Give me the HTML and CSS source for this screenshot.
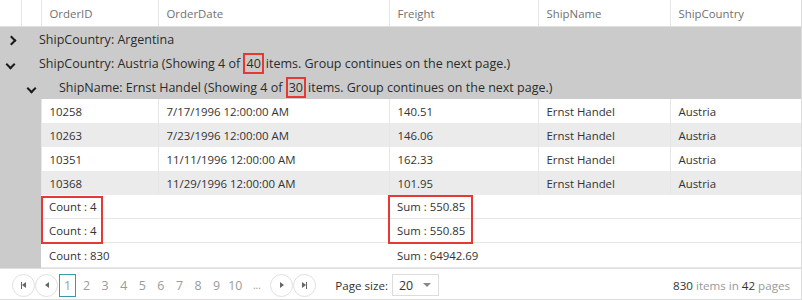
FILE: index.html
```html
<!DOCTYPE html>
<html>
<head>
  <meta charset="utf-8">
  <title>Orders Grid</title>
  <link rel="stylesheet" href="styles.css">
</head>

<body>
  <div class="grid">
    <table class="grid-table">
      <colgroup>
        <col class="col-indent">
        <col class="col-indent2">
        <col class="col-id">
        <col class="col-date">
        <col class="col-freight">
        <col class="col-name">
        <col>
      </colgroup>
      <thead>
        <tr>
          <th></th>
          <th></th>
          <th>OrderID</th>
          <th>OrderDate</th>
          <th>Freight</th>
          <th>ShipName</th>
          <th>ShipCountry</th>
        </tr>
      </thead>
      <tbody>
        <tr class="group-row">
          <td class="toggle"><span class="chev chev-right"></span></td>
          <td colspan="6">ShipCountry: Argentina</td>
        </tr>
        <tr class="group-row">
          <td class="toggle"><span class="chev chev-down"></span></td>
          <td colspan="6">ShipCountry: Austria (Showing 4 of <span class="mark">40</span>items. Group continues on the next page.)</td>
        </tr>
        <tr class="group-row">
          <td></td>
          <td class="toggle"><span class="chev chev-down"></span></td>
          <td colspan="5">ShipName: Ernst Handel (Showing 4 of <span class="mark">30</span>items. Group continues on the next page.)</td>
        </tr>
        <tr class="data-row">
          <td class="indent"></td><td class="indent"></td>
          <td>10258</td><td>7/17/1996 12:00:00 AM</td><td>140.51</td><td>Ernst Handel</td><td>Austria</td>
        </tr>
        <tr class="data-row alt">
          <td class="indent"></td><td class="indent"></td>
          <td>10263</td><td>7/23/1996 12:00:00 AM</td><td>146.06</td><td>Ernst Handel</td><td>Austria</td>
        </tr>
        <tr class="data-row">
          <td class="indent"></td><td class="indent"></td>
          <td>10351</td><td>11/11/1996 12:00:00 AM</td><td>162.33</td><td>Ernst Handel</td><td>Austria</td>
        </tr>
        <tr class="data-row alt">
          <td class="indent"></td><td class="indent"></td>
          <td>10368</td><td>11/29/1996 12:00:00 AM</td><td>101.95</td><td>Ernst Handel</td><td>Austria</td>
        </tr>
        <tr class="footer-row">
          <td class="indent"></td><td class="indent"></td>
          <td>Count : 4</td><td></td><td>Sum : 550.85</td><td></td><td></td>
        </tr>
        <tr class="footer-row">
          <td class="indent"></td><td class="indent"></td>
          <td>Count : 4</td><td></td><td>Sum : 550.85</td><td></td><td></td>
        </tr>
        <tr class="footer-row">
          <td class="indent"></td><td class="indent"></td>
          <td>Count : 830</td><td></td><td>Sum : 64942.69</td><td></td><td></td>
        </tr>
      </tbody>
    </table>

    <!-- highlight boxes drawn over the aggregate cells -->
    <div class="callout callout-count"></div>
    <div class="callout callout-sum"></div>

    <div class="pager">
      <div class="pager-nav">
        <span class="nav-btn"><span class="bar"></span><span class="tri tri-left"></span></span>
        <span class="nav-btn"><span class="tri tri-left"></span></span>
        <span class="page current">1</span>
        <span class="page">2</span>
        <span class="page">3</span>
        <span class="page">4</span>
        <span class="page">5</span>
        <span class="page">6</span>
        <span class="page">7</span>
        <span class="page">8</span>
        <span class="page">9</span>
        <span class="page">10</span>
        <span class="page more">...</span>
        <span class="nav-btn"><span class="tri tri-right"></span></span>
        <span class="nav-btn"><span class="tri tri-right"></span><span class="bar"></span></span>
      </div>
      <div class="page-size">
        <span>Page size:</span>
        <span class="dropdown">20<span class="caret"></span></span>
      </div>
      <div class="pager-info"><b>830</b> items in <b>42</b> pages</div>
    </div>
  </div>
</body>
</html>
```

FILE: styles.css
```css
body {
  margin: 0;
  font-family: "Open Sans", "Noto Sans", sans-serif;
  font-size: 11.4px;
  color: #333;
  background-color: white;
}

.grid {
  position: relative;
  width: 802px;
  height: 300px;
  box-sizing: border-box;
  border-right: 1px solid #dcdcdc;
  border-bottom: 1px solid #dcdcdc;
  overflow: hidden;
}

.grid-table {
  width: 100%;
  border-collapse: collapse;
  table-layout: fixed;
}

.col-indent { width: 21px; }
.col-indent2 { width: 20px; }
.col-id { width: 117px; }
.col-date { width: 231px; }
.col-freight { width: 149px; }
.col-name { width: 132px; }

th {
  height: 26px;
  padding: 0 8px;
  text-align: left;
  font-weight: normal;
  color: #707070;
  border-left: 1px solid #e6e6e6;
  border-bottom: 1px solid #e0e0e0;
  white-space: nowrap;
}

th:first-child {
  border-left: none;
}

td {
  height: 24px;
  padding: 0 8px;
  white-space: nowrap;
}

.group-row td {
  background-color: #cbcbcb;
  font-size: 12.5px;
  color: #2b2b2b;
}

.group-row td.toggle {
  padding: 0;
  text-align: center;
}

.group-row td[colspan] {
  padding-left: 18px;
}

.chev {
  display: inline-block;
  width: 5px;
  height: 5px;
  border-right: 2px solid #1a1a1a;
  border-bottom: 2px solid #1a1a1a;
}

.chev-right {
  transform: rotate(-45deg);
  margin-left: 1px;
  margin-top: 3px;
}

.chev-down {
  transform: rotate(45deg);
  margin-top: -2px;
}

.mark {
  border: 2px solid #e53935;
  padding: 0 1px;
  margin-right: 2px;
}

.data-row td {
  border-left: 1px solid #e6e6e6;
}

.data-row.alt td {
  background-color: #ebebeb;
}

td.indent {
  background-color: #cbcbcb;
  border-left: none;
  padding: 0;
}

.data-row td.indent {
  background-color: #cbcbcb;
}

.footer-row td {
  height: 23px;
  border-bottom: 1px solid #e6e6e6;
}

.footer-row:last-child td {
  height: 24px;
}

.footer-row td.indent {
  border-bottom: none;
}

.callout {
  position: absolute;
  border: 2px solid #e53935;
  box-sizing: border-box;
}

.callout-count {
  left: 41px;
  top: 196px;
  width: 62px;
  height: 48px;
}

.callout-sum {
  left: 388px;
  top: 195px;
  width: 85px;
  height: 49px;
}

.pager {
  display: flex;
  align-items: center;
  height: 32px;
  padding: 0 11px 0 12px;
  border-top: 1px solid #e0e0e0;
  color: #9a9a9a;
  font-size: 12.4px;
}

.pager-nav {
  display: flex;
  align-items: center;
}

.nav-btn {
  display: flex;
  align-items: center;
  justify-content: center;
  width: 21px;
  height: 21px;
  border: 1px solid #e0e0e0;
  border-radius: 50%;
}

.bar {
  width: 1px;
  height: 7px;
  background-color: #666;
}

.tri {
  width: 0;
  height: 0;
  border-top: 3.5px solid transparent;
  border-bottom: 3.5px solid transparent;
}

.tri-left {
  border-right: 4px solid #666;
}

.tri-right {
  border-left: 4px solid #666;
}

.page {
  min-width: 17px;
  height: 21px;
  line-height: 21px;
  text-align: center;
  margin-right: 1.6px;
  box-sizing: border-box;
}

.page.current {
  border: 1px solid #3c98b0;
  height: 23px;
  line-height: 21px;
  margin-left: 1px;
  margin-right: 2px;
}

.page.more {
  margin: 0 5px 0 3px;
  font-size: 10px;
}

.page-size {
  display: flex;
  align-items: center;
  margin-left: 19px;
  font-size: 11.6px;
  color: #333;
}

.dropdown {
  display: flex;
  align-items: center;
  justify-content: space-between;
  width: 47px;
  height: 22px;
  margin-left: 4px;
  padding: 0 7px 0 6px;
  box-sizing: border-box;
  border: 1px solid #dcdcdc;
  font-size: 12.4px;
}

.caret {
  width: 0;
  height: 0;
  border-left: 4px solid transparent;
  border-right: 4px solid transparent;
  border-top: 4px solid #888;
}

.pager-info {
  margin-left: auto;
  font-size: 11.6px;
  color: #999;
}

.pager-info b {
  font-weight: normal;
  color: #333;
}
```
